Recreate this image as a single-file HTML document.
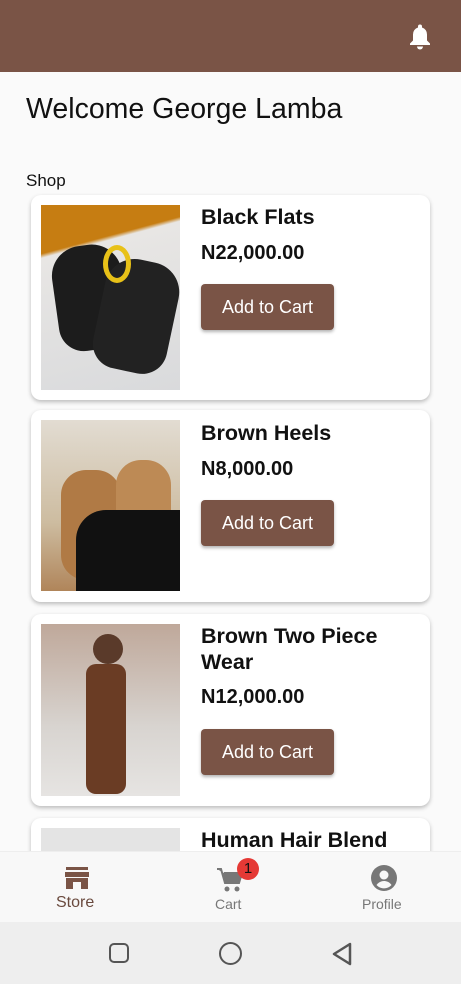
<!DOCTYPE html>
<html><head><meta charset="utf-8"><style>
*{margin:0;padding:0;box-sizing:border-box}
body{width:461px;height:984px;overflow:hidden;background:#fafafa;font-family:"Liberation Sans",Roboto,sans-serif;position:relative}
.hdr{position:absolute;left:0;top:0;width:461px;height:72px;background:#7a5446}
.welcome{position:absolute;left:26px;top:93px;font-size:28.5px;color:#111}
.shop{position:absolute;left:26px;top:171px;font-size:17px;color:#111}
.card{position:absolute;left:31px;width:399px;background:#fff;border-radius:10px;box-shadow:0 2px 4px rgba(0,0,0,.25)}
.img{position:absolute;left:10px;top:10px;width:139px}
.t{position:absolute;left:170px;font-size:21.5px;font-weight:bold;color:#111;line-height:26px}
.p{position:absolute;left:170px;font-size:20px;font-weight:bold;color:#111}
.btn{position:absolute;left:170px;width:133px;height:46px;background:#7a5446;color:#fff;border-radius:4px;font-size:18px;text-align:center;line-height:46px;box-shadow:0 2px 3px rgba(0,0,0,.3)}
.nav{position:absolute;left:0;top:851px;width:461px;height:71px;background:#f8f8f8;border-top:1px solid #eee}
.sys{position:absolute;left:0;top:922px;width:461px;height:62px;background:#eeeeee}
.lbl{position:absolute;font-size:15px;color:#777}
</style></head><body>
<div class="hdr">
<svg style="position:absolute;left:408px;top:24px" width="24" height="26" viewBox="0 0 24 26"><path d="M12 0.5a2 2 0 0 1 2 2v1a7 7 0 0 1 5 7v6l3 3v1.5H2V19.5l3-3v-6a7 7 0 0 1 5-7v-1a2 2 0 0 1 2-2z" fill="#fff"/><path d="M9 22.5h6a3 3 0 0 1-6 0z" fill="#fff"/></svg>
</div>
<div class="welcome">Welcome George Lamba</div>
<div class="shop">Shop</div>

<div class="card" style="top:195px;height:205px">
<div class="img" style="height:185px;background:linear-gradient(165deg,#c67d12 0,#c67d12 22%,#e8e6e4 24%,#d9dadc 100%)">
<div style="position:absolute;left:14px;top:40px;width:70px;height:105px;background:#1c1c1c;border-radius:30px 30px 25px 25px;transform:rotate(-8deg)"></div>
<div style="position:absolute;left:58px;top:55px;width:75px;height:112px;background:#222;border-radius:30px 30px 25px 25px;transform:rotate(12deg)"></div>
<div style="position:absolute;left:62px;top:40px;width:28px;height:38px;border:5px solid #e8c118;border-radius:50%"></div>
</div>
<div class="t" style="top:9px">Black Flats</div>
<div class="p" style="top:47px">N22,000.00</div>
<div class="btn" style="top:89px">Add to Cart</div>
</div>

<div class="card" style="top:410px;height:192px">
<div class="img" style="height:171px;background:linear-gradient(180deg,#e2dcd2,#cdbca0 60%,#b0855a)">
<div style="position:absolute;left:20px;top:50px;width:60px;height:110px;background:#b07a45;border-radius:25px"></div>
<div style="position:absolute;left:75px;top:40px;width:55px;height:100px;background:#bd8a55;border-radius:25px"></div>
<div style="position:absolute;left:35px;top:90px;width:104px;height:81px;background:#111;border-radius:30px 0 0 0"></div>
</div>
<div class="t" style="top:10px">Brown Heels</div>
<div class="p" style="top:48px">N8,000.00</div>
<div class="btn" style="top:90px">Add to Cart</div>
</div>

<div class="card" style="top:614px;height:192px">
<div class="img" style="height:172px;background:linear-gradient(180deg,#bfa89a,#d8d4d0 60%,#e6e4e2)">
<div style="position:absolute;left:52px;top:10px;width:30px;height:30px;background:#5a3a2a;border-radius:50%"></div>
<div style="position:absolute;left:45px;top:40px;width:40px;height:130px;background:#6a3c24;border-radius:10px"></div>
</div>
<div class="t" style="top:9px">Brown Two Piece<br>Wear</div>
<div class="p" style="top:72px">N12,000.00</div>
<div class="btn" style="top:115px">Add to Cart</div>
</div>

<div class="card" style="top:818px;height:60px">
<div class="img" style="height:50px;background:#e4e4e4"></div>
<div class="t" style="top:9px">Human Hair Blend</div>
</div>

<div class="nav">
<svg style="position:absolute;left:65px;top:15px" width="24" height="22" viewBox="0 0 24 22"><rect x="1" y="0" width="22" height="3" fill="#7a5446"/><rect x="0" y="5" width="24" height="5" fill="#7a5446"/><path d="M1 11h22v11h-7v-7H8v7H1z" fill="#7a5446"/></svg>
<div class="lbl" style="left:56px;top:42px;font-size:16px;color:#6a4a3e">Store</div>
<svg style="position:absolute;left:216px;top:14px" width="28" height="28" viewBox="0 0 28 28"><path d="M1 3h4l4 14h14l3-10H8" fill="#777" stroke="#777" stroke-width="2"/><circle cx="11" cy="23" r="2.5" fill="#777"/><circle cx="21" cy="23" r="2.5" fill="#777"/></svg>
<div style="position:absolute;left:237px;top:6px;width:22px;height:22px;background:#e53935;border-radius:50%;color:#111;font-size:15px;text-align:center;line-height:22px">1</div>
<div class="lbl" style="left:215px;top:44px;font-size:14px">Cart</div>
<svg style="position:absolute;left:371px;top:13px" width="26" height="26" viewBox="0 0 26 26"><circle cx="13" cy="13" r="13" fill="#777"/><circle cx="13" cy="10" r="4.5" fill="#f8f8f8"/><path d="M5.5 20c2-3 5-4 7.5-4s5.5 1 7.5 4a10 10 0 0 1-15 0z" fill="#f8f8f8"/></svg>
<div class="lbl" style="left:362px;top:44px;font-size:14px">Profile</div>
</div>
<div class="sys">
<div style="position:absolute;left:109px;top:21px;width:20px;height:20px;border:2.5px solid #555;border-radius:5px"></div>
<div style="position:absolute;left:219px;top:20px;width:23px;height:23px;border:2.5px solid #555;border-radius:50%"></div>
<svg style="position:absolute;left:331px;top:19px" width="22" height="26" viewBox="0 0 22 26"><path d="M19 3L3 13l16 10z" fill="none" stroke="#555" stroke-width="2.5" stroke-linejoin="round"/></svg>
</div>
</body></html>
